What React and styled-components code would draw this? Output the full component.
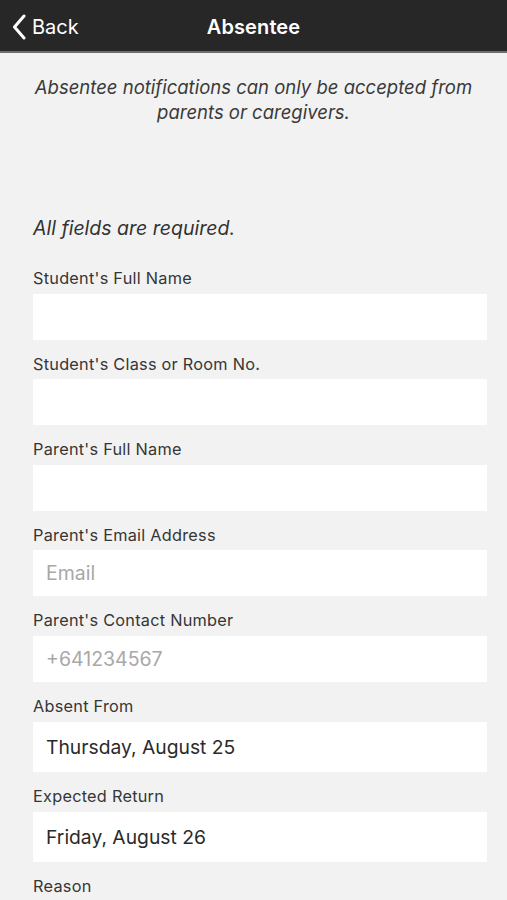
import React from "react";
import styled, { createGlobalStyle } from "styled-components";

const Global = createGlobalStyle`
  html, body { margin: 0; padding: 0; background: #f2f2f2; }
  body { font-family: Inter, "Noto Sans", "Liberation Sans", sans-serif; -webkit-font-smoothing: antialiased; }
  * { box-sizing: border-box; }
`;

const Page = styled.div`
  width: 507px;
  min-height: 900px;
  background: #f2f2f2;
  overflow: hidden;
`;

const NavBar = styled.header`
  position: relative;
  height: 53px;
  padding-top: 3px;
  background: #272727;
  border-bottom: 2px solid #6e6e6e;
  display: flex;
  align-items: center;
  justify-content: center;
`;

const BackButton = styled.button`
  position: absolute;
  left: 12px;
  top: 3px;
  height: 48px;
  display: flex;
  align-items: center;
  gap: 6px;
  background: none;
  border: none;
  padding: 0;
  color: #ffffff;
  font-family: Inter, "Liberation Sans", sans-serif;
  font-size: 20px;
  font-weight: 400;
  cursor: pointer;
`;

const Title = styled.h1`
  margin: 0;
  color: #ffffff;
  font-size: 20px;
  font-weight: 600;
  letter-spacing: 0.1px;
`;

const Content = styled.main`
  padding: 0 20px 0 33px;
`;

const Notice = styled.p`
  margin: 22px 0 0 -13px;
  text-align: center;
  font-style: italic;
  font-size: 18.5px;
  line-height: 25px;
  color: #3a3a3a;
`;

const Required = styled.p`
  margin: 91px 0 0;
  font-style: italic;
  font-size: 19.5px;
  line-height: 24px;
  color: #333333;
`;

const Form = styled.div`
  margin-top: 28px;
  display: flex;
  flex-direction: column;
`;

const Field = styled.label`
  display: flex;
  flex-direction: column;
  margin-bottom: 14px;
`;

const Label = styled.span`
  font-size: 16.3px;
  letter-spacing: 0.25px;
  line-height: 20px;
  color: #363636;
  margin-bottom: ${p => (p.$tight ? "6px" : "5.5px")};
`;

const Input = styled.input`
  height: ${p => (p.$tall ? "50px" : "46px")};
  border: none;
  outline: none;
  background: #ffffff;
  padding: 0 13px;
  font-family: Inter, "Liberation Sans", sans-serif;
  font-size: ${p => (p.$tall ? "19.3px" : "19.5px")};
  color: #2a2a2a;
  width: 100%;
  &::placeholder { color: #a8a8a8; }
`;

const ChevronLeft = () => (
  <svg width="14" height="26" viewBox="0 0 14 26" fill="none">
    <path d="M12 2 L2.5 13 L12 24" stroke="#fff" strokeWidth="3" strokeLinecap="round" strokeLinejoin="round" />
  </svg>
);

const fields = [
  { label: "Student's Full Name" },
  { label: "Student's Class or Room No." },
  { label: "Parent's Full Name" },
  { label: "Parent's Email Address", placeholder: "Email" },
  { label: "Parent's Contact Number", placeholder: "+641234567" },
  { label: "Absent From", value: "Thursday, August 25", tall: true },
  { label: "Expected Return", value: "Friday, August 26", tall: true },
];

export default function App() {
  return (
    <Page>
      <Global />
      <NavBar>
        <BackButton>
          <ChevronLeft />
          Back
        </BackButton>
        <Title>Absentee</Title>
      </NavBar>
      <Content>
        <Notice>
          Absentee notifications can only be accepted from
          <br />
          parents or caregivers.
        </Notice>
        <Required>All fields are required.</Required>
        <Form>
          {fields.map(f => (
            <Field key={f.label}>
              <Label $tight={f.tall}>{f.label}</Label>
              <Input
                $tall={f.tall}
                placeholder={f.placeholder}
                defaultValue={f.value}
                readOnly={!!f.value}
              />
            </Field>
          ))}
          <Field>
            <Label>Reason</Label>
          </Field>
        </Form>
      </Content>
    </Page>
  );
}
